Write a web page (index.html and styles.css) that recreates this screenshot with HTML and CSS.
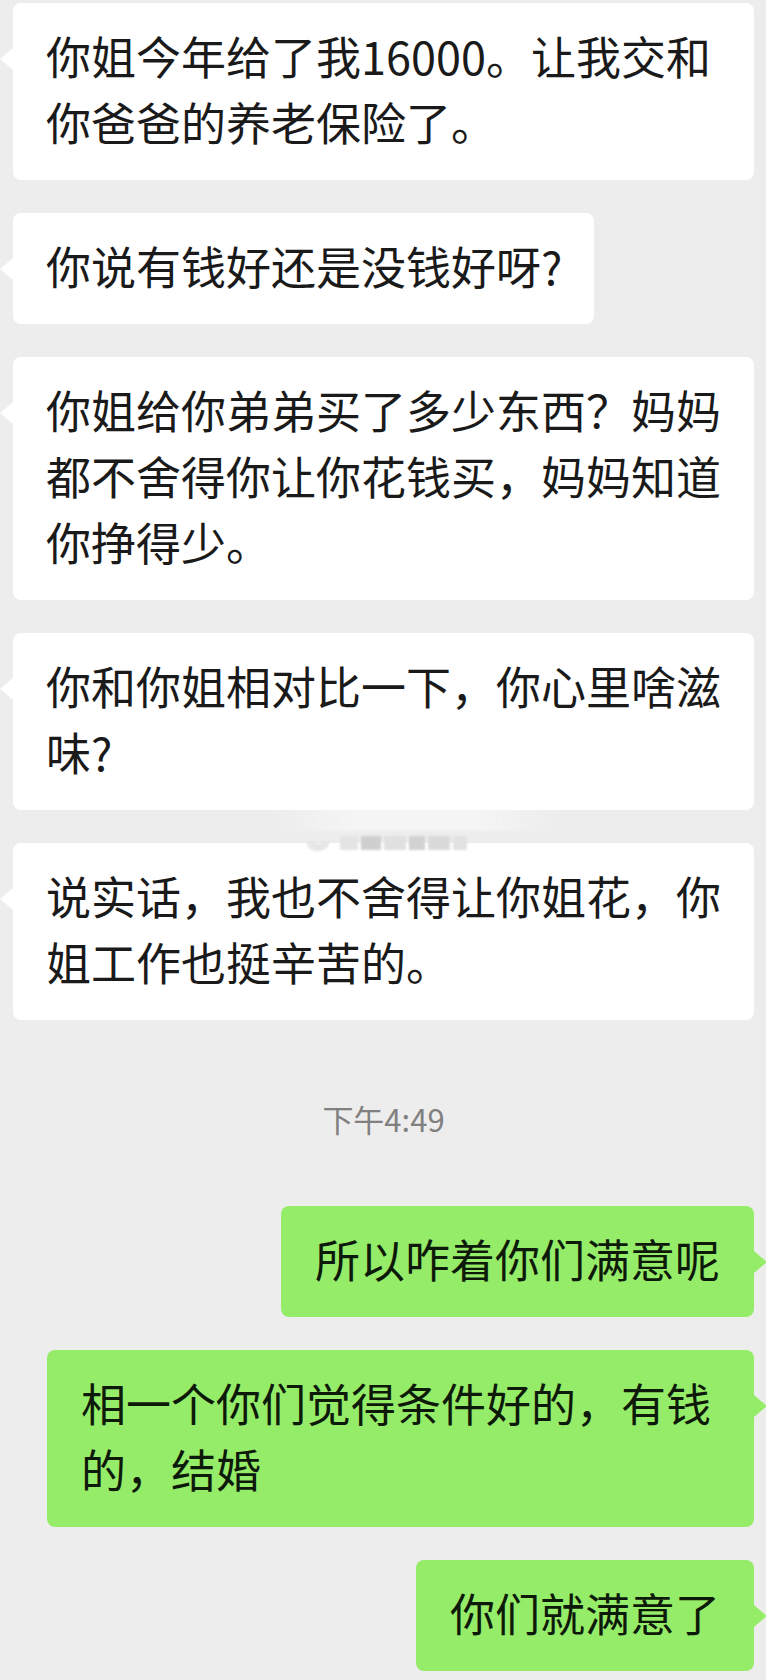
FILE: index.html
```html
<!DOCTYPE html>
<html lang="zh-CN">
<head>
    <meta charset="UTF-8">
    <meta name="viewport" content="width=device-width, initial-scale=1.0">
    <title>聊天记录</title>
    <link rel="stylesheet" href="styles.css">
</head>
<body>

    <!-- Chat history -->
    <div class="chat">
        <div class="msg msg-in">
            <div class="bubble">你姐今年给了我16000。让我交和你爸爸的养老保险了。</div>
        </div>
        <div class="msg msg-in">
            <div class="bubble">你说有钱好还是没钱好呀?</div>
        </div>
        <div class="msg msg-in">
            <div class="bubble">你姐给你弟弟买了多少东西？妈妈都不舍得你让你花钱买，妈妈知道你挣得少。</div>
        </div>
        <div class="msg msg-in">
            <div class="bubble">你和你姐相对比一下，你心里啥滋味?</div>
        </div>
        <div class="msg msg-in">
            <div class="bubble">说实话，我也不舍得让你姐花，你姐工作也挺辛苦的。</div>
            <!-- faint watermark over the bubble -->
            <div class="watermark">
                <svg class="wm-logo" width="26" height="20" viewBox="0 0 26 20">
                    <path d="M3 9a10 8 0 0 0 20 0" fill="none" stroke="#d6d6d6" stroke-width="1.6"/>
                    <path d="M6 9a7 5.5 0 0 0 14 0" fill="none" stroke="#d6d6d6" stroke-width="1.6"/>
                    <path d="M9 9a4 3 0 0 0 8 0" fill="none" stroke="#d6d6d6" stroke-width="1.6"/>
                </svg>
                <span class="wm-block wm-b1"></span>
                <span class="wm-block wm-b2"></span>
                <span class="wm-block wm-b3"></span>
                <span class="wm-block wm-b4"></span>
                <span class="wm-block wm-b5"></span>
                <span class="wm-block wm-b6"></span>
            </div>
        </div>

        <div class="time">下午4:49</div>

        <div class="msg msg-out">
            <div class="bubble">所以咋着你们满意呢</div>
        </div>
        <div class="msg msg-out">
            <div class="bubble">相一个你们觉得条件好的，有钱的，结婚</div>
        </div>
        <div class="msg msg-out">
            <div class="bubble">你们就满意了</div>
        </div>
    </div>

</body>
</html>
```

FILE: styles.css
```css
body {
    margin: 0;
    padding: 0;
    background-color: #ededed; /* WeChat chat background */
    font-family: "Noto Sans CJK SC", "Noto Sans", sans-serif;
}

.chat {
    display: flex;
    flex-direction: column;
    gap: 33px;
    padding: 3px 12px 0 13px;
}

.msg {
    display: flex;
    position: relative;
}

.msg-out {
    justify-content: flex-end;
}

.bubble {
    position: relative;
    box-sizing: border-box;
    max-width: 741px;
    padding: 20px 32px 25px 33px;
    border-radius: 8px;
    background-color: #fff;
    color: #1a1a1a;
    font-size: 45px;
    line-height: 66px;
}

/* little tail pointing at the avatar */
.msg-in .bubble::before {
    content: "";
    position: absolute;
    left: -13px;
    top: 45px;
    border-top: 11px solid transparent;
    border-bottom: 11px solid transparent;
    border-right: 13px solid #fff;
}

.msg-out .bubble {
    max-width: 707px;
    padding: 20px 34px 25px 34px;
    background-color: #95ec69; /* green for own messages */
    color: #0e1a09;
}

.msg-out .bubble::after {
    content: "";
    position: absolute;
    right: -13px;
    top: 45px;
    border-top: 11px solid transparent;
    border-bottom: 11px solid transparent;
    border-left: 13px solid #95ec69;
}

.time {
    margin: 46px 0 34px;
    text-align: center;
    font-size: 31px;
    line-height: 40px;
    color: #808080;
}

/* Weibo style watermark, blurred */
.watermark {
    position: absolute;
    left: 292px;
    top: -10px;
    display: flex;
    align-items: center;
    gap: 3px;
    height: 20px;
    filter: blur(0.8px);
}

.watermark::before {
    content: "";
    position: absolute;
    left: -40px;
    top: -24px;
    width: 300px;
    height: 22px;
    background: linear-gradient(90deg, rgba(255,255,255,0), rgba(255,255,255,0.45) 30%, rgba(255,255,255,0.45) 70%, rgba(255,255,255,0));
}

.wm-logo {
    margin-right: 6px;
}

.wm-block {
    display: inline-block;
    height: 14px;
    background-color: #dcdcdc;
}

.wm-b1 { width: 18px; background-color: #e4e4e4; }
.wm-b2 { width: 20px; background-color: #cfcfcf; }
.wm-b3 { width: 22px; background-color: #e0e0e0; }
.wm-b4 { width: 16px; background-color: #d2d2d2; }
.wm-b5 { width: 22px; background-color: #dadada; }
.wm-b6 { width: 14px; background-color: #e2e2e2; }
```
